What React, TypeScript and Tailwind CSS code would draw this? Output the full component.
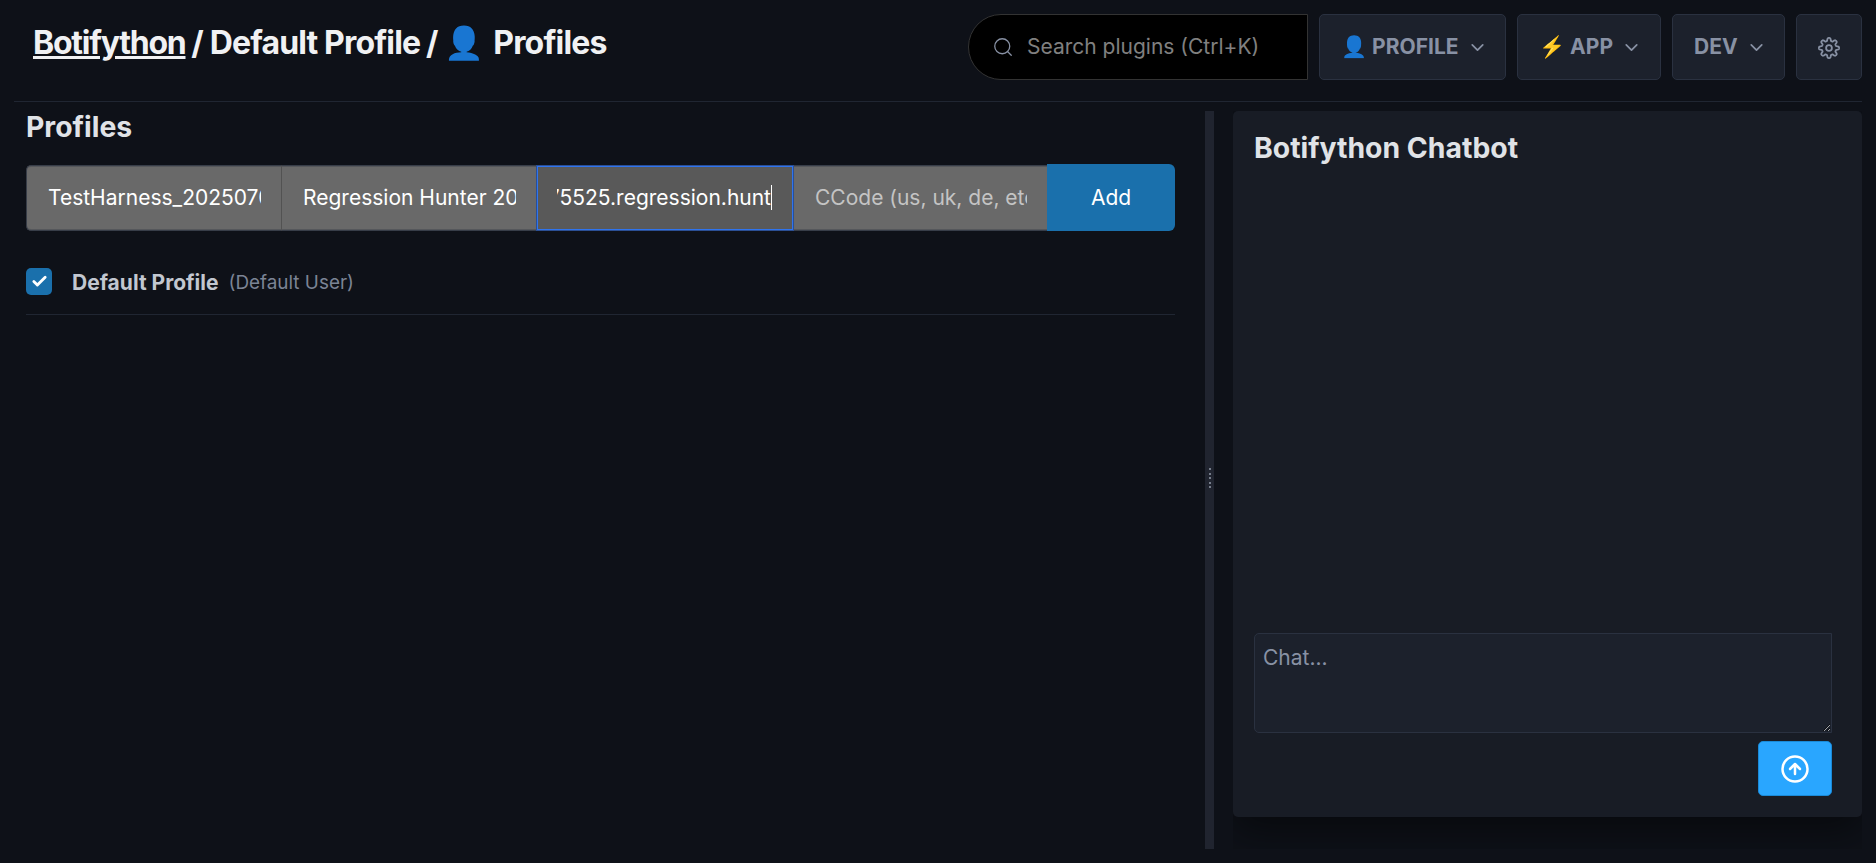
import React from "react";

const CHEVRON = (
  <svg className="ml-[8px] h-[21px] w-[21px] shrink-0" viewBox="0 0 24 24" fill="none" stroke="#8891a4" strokeWidth="2" strokeLinecap="round" strokeLinejoin="round">
    <polyline points="6 9 12 15 18 9" />
  </svg>
);

// Outline of an eight-toothed gear centred on (12, 12).
const GEAR_POINTS = Array.from({ length: 160 }, (_, i) => {
  const a = (i / 160) * 2 * Math.PI - Math.PI / 2;
  const r = 8.6 + 1.5 * Math.tanh(2 * Math.cos(8 * a));
  return `${(12 + r * Math.cos(a)).toFixed(2)},${(12 + r * Math.sin(a)).toFixed(2)}`;
}).join(" ");

function NavButton({ icon, label, width }: { icon?: string; label: string; width: string }) {
  return (
    <button className={`flex h-[66px] items-center rounded-[5px] border border-[#2a3140] bg-[#1c212c] pl-[21px] font-bold text-[#8891a4] ${width}`}>
      <span className="whitespace-pre">{icon ? `${icon} ${label}` : label}</span>
      {CHEVRON}
    </button>
  );
}

function Field({ text, width, className = "", color = "text-white" }: { text: string; width: string; className?: string; color?: string }) {
  return (
    <div className={`flex h-[66px] shrink-0 items-center border-y border-[#373d48] bg-[#696969] pl-[21px] pr-[20px] shadow-[inset_0_1px_0_#55575b,inset_0_-1px_0_#55575b] ${width} ${className}`}>
      <span className={`block w-full overflow-hidden whitespace-nowrap ${color}`}>{text}</span>
    </div>
  );
}

export default function App() {
  return (
    <div className="flex h-[863px] w-[1876px] flex-col overflow-hidden bg-[#0e1118] px-[14px] pt-[14px] font-['Inter','Noto_Color_Emoji',sans-serif] text-[21px] leading-[31.5px]">
      <header className="flex h-[88px] shrink-0 items-start justify-between border-b border-[#202632]">
        <h1 className="flex h-[58px] items-center whitespace-pre pl-[19px] text-[32px] font-bold tracking-[-0.8px] text-[#f0f1f3]">
          <a className="tracking-[-1.25px] underline">Botifython</a>
          <span className="ml-[-1px] tracking-[-0.800px]"> / </span>
          <span className="tracking-[-0.85px]">Default Profile</span>
          <span className="ml-[-1px] tracking-[-0.800px]"> / </span>
          <span>👤</span>
          <span className="ml-[3px]"> Profiles</span>
        </h1>
        <nav className="flex gap-[11px]">
          <div className="flex h-[66px] w-[340px] items-center rounded-l-full border border-[#333] bg-black pl-[25px] text-[#808080]">
            <svg className="mr-[15px] h-[18px] w-[18px]" viewBox="0 0 24 24" fill="none" stroke="#8891a4" strokeWidth="1.700" strokeLinecap="round">
              <circle cx="11" cy="11" r="10" />
              <path d="M23 23l-5-5" />
            </svg>
            Search plugins (Ctrl+K)
          </div>
          <NavButton icon="👤" label="PROFILE" width="w-[187px]" />
          <NavButton icon="⚡" label="APP" width="w-[144px]" />
          <NavButton label="DEV" width="w-[113px]" />
          <button className="flex h-[66px] w-[66px] items-center justify-center rounded-[5px] border border-[#2a3140] bg-[#1c212c]">
            <svg className="mt-[2px] h-[24px] w-[24px]" viewBox="0 0 24 24" fill="none" stroke="#8891a4" strokeWidth="1.800" strokeLinecap="round" strokeLinejoin="round">
              <circle cx="12" cy="12" r="2.900" />
              <polygon points={GEAR_POINTS} />
            </svg>
          </button>
        </nav>
      </header>
      <div className="flex min-h-0 flex-1 pt-[9px]">
        <main className="ml-[12px] w-[1149px] shrink-0">
          <h2 className="h-[53px] pt-px text-[28.350px] font-bold text-[#e0e3e7]">Profiles</h2>
          <form className="flex h-[67px] items-center">
            <Field text="TestHarness_20250706" width="w-[256px]" className="rounded-l-[5px] border-x border-r-[#525252]" />
            <Field text="Regression Hunter 2025" width="w-[254px]" />
            <div className="flex h-[66px] w-[258px] shrink-0 items-center border border-[#2b4f94] bg-[#595959] pl-[20px] pr-[21px] text-white shadow-[inset_0_0_0_1px_#2f74ee]">
              <div className="flex w-full items-center justify-end overflow-hidden whitespace-nowrap">
                75525.regression.hunt
                <i className="h-[25px] w-px shrink-0 bg-white" />
              </div>
            </div>
            <Field text="CCode (us, uk, de, etc.)" width="w-[253px]" color="text-[#c4c4c4]" />
            <button type="button" className="h-[67px] flex-1 rounded-r-[6px] bg-[#1a70ac] text-white">Add</button>
          </form>
          <div className="mt-[19px] flex h-[65px] items-center border-b border-[#202632]">
            <span className="mb-[2px] flex h-[27px] w-[26px] items-center justify-center rounded-[5px] bg-[#1a70ac]">
              <svg className="h-[17px] w-[17px]" viewBox="0 0 24 24" fill="none" stroke="#fff" strokeWidth="4" strokeLinecap="round" strokeLinejoin="round">
                <polyline points="20 6 9 17 4 12" />
              </svg>
            </span>
            <b className="ml-[20px] mt-px text-[#c2c7d0]">Default Profile</b>
            <span className="ml-[10px] mt-px text-[18.900px] text-[#7b8495]">(Default User)</span>
          </div>
        </main>
        <div className="ml-[30px] flex h-[738px] w-[9px] shrink-0 flex-col items-center justify-center gap-[2.5px] bg-[#20242f] pb-[4px]">
          {[0, 1, 2, 3, 4].map((n) => (
            <i key={n} className="h-[2px] w-[2px] bg-[#767d8b]" />
          ))}
        </div>
        <div className="ml-[19px] h-[738px] w-[629px] shrink-0 overflow-hidden">
          <aside className="flex h-[706px] flex-col rounded-[5px] bg-[#181c25] px-[21px] pt-[22px] shadow-[0_12px_40px_rgba(0,0,0,0.5)]">
            <h2 className="text-[28.350px] font-bold text-[#e0e3e7]">Botifython Chatbot</h2>
            <textarea placeholder="Chat..." className="mt-auto block h-[100px] w-[578px] shrink-0 resize-y rounded-l-[5px] border border-[#2a3140] bg-[#1c212c] px-[8px] py-[8px] placeholder:text-[#8891a4]" />
            <button className="mt-[8px] mb-[21px] mr-[9px] flex h-[55px] w-[74px] shrink-0 items-center justify-center self-end rounded-[5px] border border-[#1a8ad8] bg-[#29a6ff] pt-px">
              <svg className="h-[30px] w-[30px]" viewBox="0 0 24 24" fill="none" stroke="#fff" strokeWidth="2" strokeLinecap="round" strokeLinejoin="round">
                <circle cx="12" cy="12" r="10" />
                <path d="m16 12-4-4-4 4M12 16V8" />
              </svg>
            </button>
          </aside>
        </div>
      </div>
    </div>
  );
}
